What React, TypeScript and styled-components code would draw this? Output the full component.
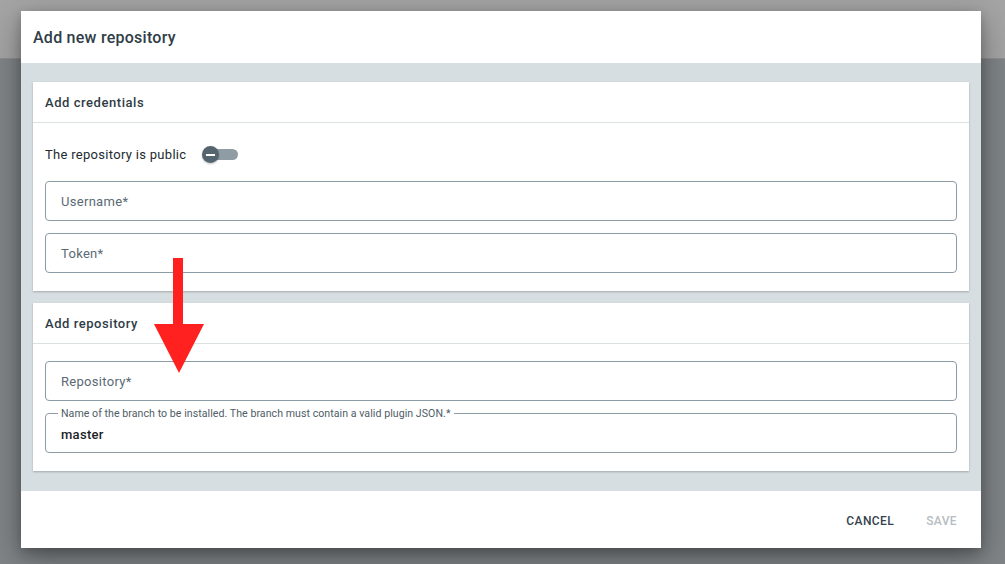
import * as React from 'react';
import styled, { createGlobalStyle } from 'styled-components';

const GlobalStyle = createGlobalStyle`
  html, body {
    margin: 0;
    padding: 0;
    height: 100%;
  }
  body {
    font-family: Roboto, "Noto Sans", Arial, sans-serif;
    -webkit-font-smoothing: antialiased;
  }
`;

const Page = styled.div`
  position: relative;
  width: 1005px;
  height: 564px;
  overflow: hidden;
  background: #7f8487;
`;

const PageHeader = styled.div`
  height: 58px;
  background: #a4a4a4;
  border-bottom: 1px solid #8d8f90;
`;

const Dialog = styled.div`
  position: absolute;
  left: 21px;
  top: 11px;
  width: 960px;
  height: 537px;
  display: flex;
  flex-direction: column;
  background: #ffffff;
  box-shadow: 0 10px 30px rgba(0, 0, 0, 0.35), 0 4px 10px rgba(0, 0, 0, 0.2);
`;

const DialogHeader = styled.div`
  height: 52px;
  box-sizing: border-box;
  padding: 1px 12px 0;
  display: flex;
  align-items: center;
  font-size: 16px;
  font-weight: 500;
  letter-spacing: 0.25px;
  color: #2f3d47;
`;

const DialogBody = styled.div`
  flex: 1;
  background: #d7dee2;
  padding: 19px 12px 20px;
  display: flex;
  flex-direction: column;
  gap: 12px;
`;

const Card = styled.div`
  background: #ffffff;
  box-shadow: 0 1px 2px rgba(0, 0, 0, 0.25);
`;

const CardHeader = styled.div`
  height: 41px;
  box-sizing: border-box;
  padding: 1px 12px 0;
  display: flex;
  align-items: center;
  border-bottom: 1px solid #dbe0e3;
  font-size: 13px;
  font-weight: 500;
  letter-spacing: 0.55px;
  color: #2f3c46;
`;

const CardContent = styled.div`
  padding: 17px 12px 18px;
  display: flex;
  flex-direction: column;
  gap: 12px;
`;

const ToggleRow = styled.div`
  display: flex;
  align-items: center;
  gap: 16px;
  height: 29px;
  font-size: 13px;
  letter-spacing: 0.3px;
  color: #222b31;
`;

const Track = styled.div`
  position: relative;
  width: 34px;
  height: 11px;
  border-radius: 6px;
  background: #8f9ca4;
  margin-left: 2px;
`;

const Thumb = styled.div`
  position: absolute;
  left: -2px;
  top: -3px;
  width: 17px;
  height: 17px;
  border-radius: 50%;
  background: #556570;
  box-shadow: 0 1px 2px rgba(0, 0, 0, 0.25);
  display: flex;
  align-items: center;
  justify-content: center;
  &::after {
    content: '';
    width: 9px;
    height: 2px;
    background: #ffffff;
  }
`;

const Field = styled.div`
  position: relative;
  height: 38px;
  border: 1px solid #8c9ca6;
  border-radius: 4px;
  display: flex;
  align-items: center;
  padding: 0 15px;
  font-size: 13px;
  letter-spacing: 0.3px;
  color: #5a6a74;
`;

const Legend = styled.span`
  position: absolute;
  left: 12px;
  top: -6px;
  padding: 0 3px;
  background: #ffffff;
  font-size: 10.6px;
  line-height: 12px;
  letter-spacing: 0.05px;
  color: #4e5c66;
`;

const Value = styled.span`
  font-size: 13px;
  font-weight: 500;
  color: #1b2227;
  margin-top: 2px;
`;

const Footer = styled.div`
  height: 57px;
  box-sizing: border-box;
  padding: 2px 24px 0 0;
  display: flex;
  align-items: center;
  justify-content: flex-end;
  gap: 32px;
`;

const FooterButton = styled.button<{ $disabled?: boolean }>`
  border: none;
  background: none;
  padding: 0;
  font-family: inherit;
  font-size: 12px;
  font-weight: 500;
  letter-spacing: 0.4px;
  color: ${(p) => (p.$disabled ? '#b6bdc2' : '#36434d')};
  cursor: ${(p) => (p.$disabled ? 'default' : 'pointer')};
`;

const Arrow = styled.svg`
  position: absolute;
  left: 154px;
  top: 258px;
`;

const Toggle = () => (
  <Track>
    <Thumb />
  </Track>
);

export default function App() {
  return (
    <Page>
      <GlobalStyle />
      <PageHeader />
      <Dialog>
        <DialogHeader>Add new repository</DialogHeader>
        <DialogBody>
          <Card>
            <CardHeader>Add credentials</CardHeader>
            <CardContent>
              <ToggleRow>
                The repository is public
                <Toggle />
              </ToggleRow>
              <Field>Username*</Field>
              <Field>Token*</Field>
            </CardContent>
          </Card>
          <Card>
            <CardHeader>Add repository</CardHeader>
            <CardContent>
              <Field>Repository*</Field>
              <Field>
                <Legend>Name of the branch to be installed. The branch must contain a valid plugin JSON.*</Legend>
                <Value>master</Value>
              </Field>
            </CardContent>
          </Card>
        </DialogBody>
        <Footer>
          <FooterButton>CANCEL</FooterButton>
          <FooterButton $disabled>SAVE</FooterButton>
        </Footer>
      </Dialog>
      <Arrow width="51" height="116" viewBox="0 0 51 116">
        <rect x="19" y="0" width="10" height="68" fill="#ff2020" />
        <polygon points="0,66 50,66 25,115" fill="#ff2020" />
      </Arrow>
    </Page>
  );
}
